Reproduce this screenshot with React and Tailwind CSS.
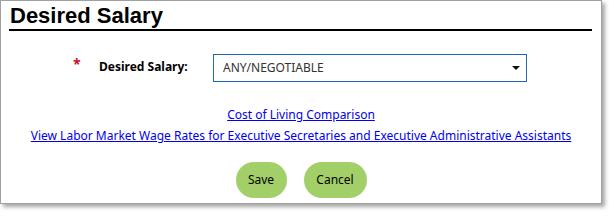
import React, { useState } from "react";

const DesiredSalaryPanel = () => {
  const [salary, setSalary] = useState("ANY/NEGOTIABLE");

  return (
    <div className="w-[612px] h-[216px] bg-white">
      {/* Panel */}
      <div className="w-[602px] h-[204px] border border-[#a0a0a0] bg-white shadow-[3px_3px_4px_rgba(0,0,0,0.35)] font-['Noto_Sans',sans-serif]">
        {/* Header */}
        <div className="ml-[8px] mr-[9px] border-b-2 border-black h-[30px]">
          <h1 className="pl-[1px] pt-[3px] text-[22px] leading-[24px] font-bold text-black font-['Liberation_Sans',Arial,sans-serif]">
            Desired Salary
          </h1>
        </div>

        {/* Salary row */}
        <div className="flex items-center h-[28px] mt-[23px]">
          <span className="ml-[72px] w-[26px] text-[#c8102e] text-[14px] leading-none font-bold self-start pt-[3px]">
            *
          </span>
          <label className="w-[114px] text-[12px] font-bold text-black -mt-[3px]">
            Desired Salary:
          </label>
          <div className="relative w-[314px] h-[28px]">
            <select
              value={salary}
              onChange={(e) => setSalary(e.target.value)}
              className="appearance-none w-full h-full border border-[#1c6ab3] bg-white pl-[9px] text-[12px] text-[#333] outline-none"
            >
              <option>ANY/NEGOTIABLE</option>
              <option>$20,000+</option>
              <option>$30,000+</option>
              <option>$40,000+</option>
            </select>
            <svg
              className="absolute right-[7px] top-[12px] pointer-events-none"
              width="8"
              height="4"
              viewBox="0 0 8 4"
            >
              <path d="M0 0h8L4 4z" fill="#111" />
            </svg>
          </div>
        </div>

        {/* Links */}
        <div className="flex flex-col items-center mt-[24px] gap-[4px] text-[12px] leading-[17px]">
          <a href="#" className="text-[#0000ee] underline">
            Cost of Living Comparison
          </a>
          <a href="#" className="text-[#0000ee] underline">
            View Labor Market Wage Rates for Executive Secretaries and Executive Administrative Assistants
          </a>
        </div>

        {/* Buttons */}
        <div className="flex justify-center gap-[17px] mt-[18px]">
          <button className="h-[36px] w-[51px] rounded-full bg-[#a3cf69] text-[12px] text-black">
            Save
          </button>
          <button className="h-[36px] w-[63px] rounded-full bg-[#a3cf69] text-[12px] text-black">
            Cancel
          </button>
        </div>
      </div>
    </div>
  );
};

export default function App() {
  return <DesiredSalaryPanel />;
}
